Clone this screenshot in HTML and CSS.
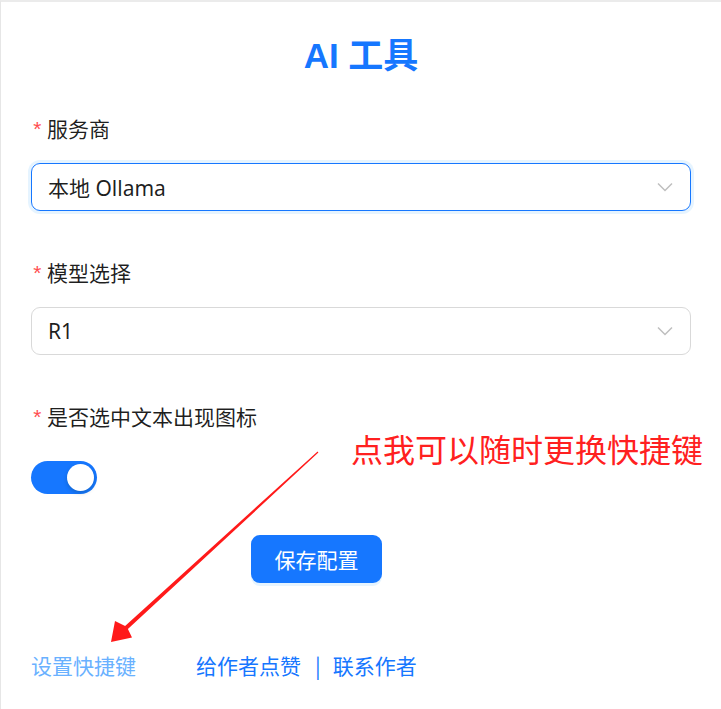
FILE: index.html
```html
<!DOCTYPE html>
<html lang="zh-CN">
<head>
<meta charset="utf-8">
<title>AI 工具</title>
<link rel="stylesheet" href="styles.css">
</head>
<body>
<div class="page">
  <h1 class="title">AI 工具</h1>
  <form class="form">
    <div class="item">
      <div class="label"><span class="req">*</span>服务商</div>
      <div class="control">
        <div class="select focused">
          <span class="value">本地 Ollama</span>
          <svg class="chev" width="16" height="10" viewBox="0 0 16 10"><path d="M1 1.5 L8 8.5 L15 1.5" fill="none" stroke="#bfbfbf" stroke-width="1.5"/></svg>
        </div>
      </div>
    </div>
    <div class="item">
      <div class="label"><span class="req">*</span>模型选择</div>
      <div class="control">
        <div class="select">
          <span class="value">R1</span>
          <svg class="chev" width="16" height="10" viewBox="0 0 16 10"><path d="M1 1.5 L8 8.5 L15 1.5" fill="none" stroke="#bfbfbf" stroke-width="1.5"/></svg>
        </div>
      </div>
    </div>
    <div class="item">
      <div class="label"><span class="req">*</span>是否选中文本出现图标</div>
      <div class="control switch-row">
        <div class="switch"><span class="knob"></span></div>
      </div>
    </div>
    <div class="item actions">
      <button type="button" class="btn">保存配置</button>
    </div>
  </form>
  <div class="links">
    <a class="link light">设置快捷键</a>
    <a class="link">给作者点赞</a>
    <span class="sep">|</span>
    <a class="link">联系作者</a>
  </div>

  <div class="note">点我可以随时更换快捷键</div>
  <svg class="arrow" width="721" height="709" viewBox="0 0 721 709">
    <polygon points="316.6,451.4 124.1,626 114,621 110,642 131,637.5 126.9,629 317.4,452.6" fill="#ff1a1a"/>
  </svg>
</div>
</body>
</html>
```
FILE: styles.css
```css
* { box-sizing: border-box; }
html, body { margin: 0; padding: 0; background: #fff; }
body {
  font-family: "Noto Sans", "Noto Sans CJK SC", sans-serif;
  color: rgba(0,0,0,0.88);
}
.page {
  position: relative;
  width: 721px;
  height: 709px;
  border-top: 2px solid #ebebeb;
  border-left: 1px solid #e6e6e6;
  padding: 30px 30px 0 30px;
  overflow: hidden;
}
.title {
  margin: 0;
  height: 48px;
  line-height: 48px;
  text-align: center;
  font-size: 35px;
  font-weight: 700;
  color: #1677ff;
  font-family: "Liberation Sans", "Noto Sans CJK SC", sans-serif;
}
.form { margin-top: 23px; }
.item { margin-bottom: 36px; }
.label {
  height: 60px;
  padding-top: 9px;
  line-height: 33px;
  font-size: 21px;
  font-family: "Noto Sans CJK SC", sans-serif;
}
.req {
  display: inline-block;
  width: 16px;
  color: #ff4d4f;
  font-size: 21px;
  font-family: "Liberation Mono", monospace;
}
.control { height: 48px; }
.switch-row { padding-top: 10px; }
.select {
  height: 48px;
  border: 1px solid #d9d9d9;
  border-radius: 9px;
  display: flex;
  align-items: center;
  justify-content: space-between;
  padding: 0 17px 0 16px;
  font-size: 21px;
}
.select.focused {
  border-color: #1677ff;
  box-shadow: 0 0 0 3px rgba(5,145,255,0.1);
}
.value { font-family: "Noto Sans", "Noto Sans CJK SC", sans-serif; }
.chev { display: block; }
.switch {
  width: 66px;
  height: 33px;
  border-radius: 17px;
  background: #1677ff;
  padding: 3px;
  display: flex;
  justify-content: flex-end;
}
.knob {
  width: 27px;
  height: 27px;
  border-radius: 50%;
  background: #fff;
  box-shadow: 0 2px 4px rgba(0,35,11,0.2);
}
.actions { display: flex; padding-left: 220px; }
.btn {
  height: 48px;
  width: 131px;
  border: none;
  border-radius: 9px;
  background: #1677ff;
  color: #fff;
  font-size: 21px;
  font-family: "Noto Sans CJK SC", sans-serif;
  box-shadow: 0 3px 0 rgba(5,145,255,0.1);
  padding: 0;
}
.links {
  display: flex;
  align-items: center;
  margin-top: 67px;
  font-size: 21px;
  line-height: 30px;
  font-family: "Noto Sans CJK SC", sans-serif;
}
.link { color: #1677ff; }
.link.light { color: #69b1ff; margin-right: 60px; }
.sep { color: #1677ff; margin: 0 12px 0 14px; }
.note {
  position: absolute;
  left: 350px;
  top: 424px;
  font-size: 32px;
  line-height: 44px;
  color: #ff2020;
  font-family: "Noto Sans CJK SC", sans-serif;
  white-space: nowrap;
}
.arrow {
  position: absolute;
  left: 0;
  top: -2px;
  pointer-events: none;
}
```
